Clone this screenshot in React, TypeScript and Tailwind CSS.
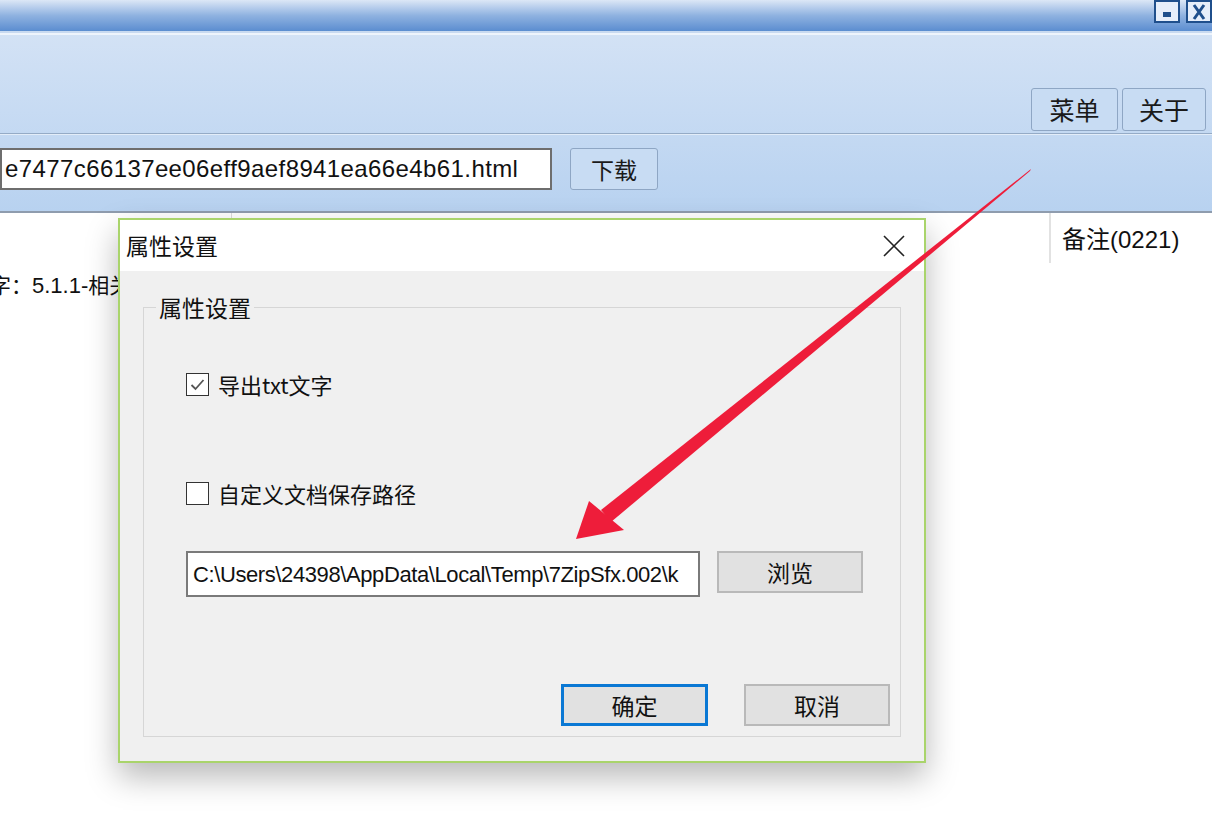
import React from "react";

const latin = "font-['Liberation_Sans','Noto_Sans_CJK_SC',sans-serif]";

const Check = ({ checked }: { checked?: boolean }) => (
  <span className="flex h-[23px] w-[23px] items-center justify-center border-[1.5px] border-[#333] bg-white">
    {checked && (
      <svg width="17" height="17" viewBox="0 0 17 17">
        <path d="M2.5 9 L6.5 13 L14.5 4" fill="none" stroke="#555" strokeWidth="1.8" />
      </svg>
    )}
  </span>
);

const Dialog = () => (
  <div className="absolute left-[118px] top-[218px] flex h-[545px] w-[808px] flex-col border-2 border-[#a9d46b] bg-[#f0f0f0] shadow-[0_14px_30px_rgba(0,0,0,0.28)]">
    <div className="flex h-[51px] items-center justify-between bg-white pl-[6px] pr-[18px]">
      <span className="text-[23px] text-[#111]">属性设置</span>
      <svg width="24" height="24" viewBox="0 0 24 24">
        <path d="M2 2 L22 22 M22 2 L2 22" stroke="#222" strokeWidth="1.6" />
      </svg>
    </div>
    <div className="flex-1 px-[23px] pb-[24px] pt-[36px]">
      <div className="relative h-full border border-[#d6d6d6]">
        <span className="absolute left-[12px] top-[-17px] bg-[#f0f0f0] px-[3px] text-[23px] leading-[32px] text-[#111]">
          属性设置
        </span>
        <div className="flex flex-col pl-[42px] pt-[60px]">
          <label className="flex items-center gap-[9px] text-[22px] text-[#111]">
            <Check checked />
            导出txt文字
          </label>
          <label className="mt-[76px] flex items-center gap-[9px] text-[22px] text-[#111]">
            <Check />
            自定义文档保存路径
          </label>
          <div className="mt-[41px] flex items-start gap-[17px]">
            <div className={`flex h-[46px] w-[514px] items-center overflow-hidden whitespace-nowrap border-2 border-[#7a7a7a] bg-white pl-[5px] text-[22px] tracking-[-0.4px] text-[#111] ${latin}`}>
              C:\Users\24398\AppData\Local\Temp\7ZipSfx.002\k
            </div>
            <button className="h-[42px] w-[146px] border-2 border-[#b9b9b9] bg-[#e1e1e1] text-[23px] text-[#111]">
              浏览
            </button>
          </div>
        </div>
        <div className="absolute bottom-[10px] right-[10px] flex gap-[36px]">
          <button className="h-[42px] w-[147px] border-[3px] border-[#0a78d4] bg-[#e1e1e1] text-[23px] text-[#111]">
            确定
          </button>
          <button className="h-[42px] w-[146px] border-2 border-[#b9b9b9] bg-[#e1e1e1] text-[23px] text-[#111]">
            取消
          </button>
        </div>
      </div>
    </div>
  </div>
);

const Arrow = () => (
  <svg className="pointer-events-none absolute left-0 top-0" width="1212" height="828">
    <polygon points="1031,169 1030,171 611,522 601,510" fill="#ee1d3a" />
    <polygon points="576,539 589,501 624,530" fill="#ee1d3a" />
  </svg>
);

export default function App() {
  return (
    <div className="relative h-[828px] w-[1212px] overflow-hidden bg-white font-['Noto_Sans_CJK_SC','Liberation_Sans',sans-serif]">
      {/* window frame + toolbar */}
      <div className="flex h-[213px] flex-col border-b-2 border-[#8f9cae] bg-gradient-to-b from-[#d8e5f6] to-[#b8d2f0]">
        <div className="flex h-[31px] justify-end bg-gradient-to-b from-[#dce7f6] via-[#8fb2e0] to-[#5b8dd0]">
          <div className="flex items-start gap-[6px]">
            <span className="flex h-[23px] w-[26px] items-end justify-center border-2 border-[#1f4f8c] bg-[#e6eefa] pb-[4px]">
              <span className="h-[5px] w-[8px] bg-[#1f4f8c]" />
            </span>
            <span className="flex h-[23px] w-[26px] items-center justify-center border-2 border-[#1f4f8c] bg-[#e6eefa]">
              <svg width="14" height="16" viewBox="0 0 14 16">
                <path d="M2 1 L12 15 M12 1 L2 15" stroke="#1f4f8c" strokeWidth="3" />
              </svg>
            </span>
          </div>
        </div>
        <div className="h-[2px] bg-[#c9daf0]" />
        <div className="h-[2px] bg-[#eef4fc]" />
        <div className="flex justify-end gap-[4px] pr-[6px] pt-[53px]">
          <button className="h-[43px] w-[87px] rounded-[3px] border border-[#8ea6c4] bg-[#c8dcf3] text-[25px] text-[#1a1a1a]">
            菜单
          </button>
          <button className="h-[43px] w-[84px] rounded-[3px] border border-[#8ea6c4] bg-[#c8dcf3] text-[25px] text-[#1a1a1a]">
            关于
          </button>
        </div>
        <div className="mt-[2px] h-[1px] bg-[#95abc6]" />
        <div className="h-[1px] bg-[#e3edf9]" />
        <div className="flex items-center gap-[18px] pt-[13px]">
          <div className={`flex h-[42px] w-[552px] items-center overflow-hidden whitespace-nowrap border-2 border-[#6e6e6e] bg-white pl-[3px] text-[24px] tracking-[0.4px] text-[#111] ${latin}`}>
            e7477c66137ee06eff9aef8941ea66e4b61.html
          </div>
          <button className="h-[42px] w-[88px] rounded-[3px] border border-[#8ea6c4] bg-[#c8dcf3] text-[23px] text-[#1a1a1a]">
            下载
          </button>
        </div>
      </div>

      {/* list header */}
      <div className="flex h-[50px] items-center">
        <div className="h-full w-[232px] border-r border-[#dcdcdc]" />
        <div className="h-full w-[819px] border-r-2 border-[#e2e2e2]" />
        <span className={`pl-[11px] pt-[4px] text-[24px] text-[#111] ${latin}`}>备注(0221)</span>
      </div>
      <div className="ml-[-10px] mt-[6px] text-[21px] text-[#111]">
        字：<span className={`${latin} text-[22px]`}>5.1.1-</span>相关内容
      </div>

      <Dialog />
      <Arrow />
    </div>
  );
}
